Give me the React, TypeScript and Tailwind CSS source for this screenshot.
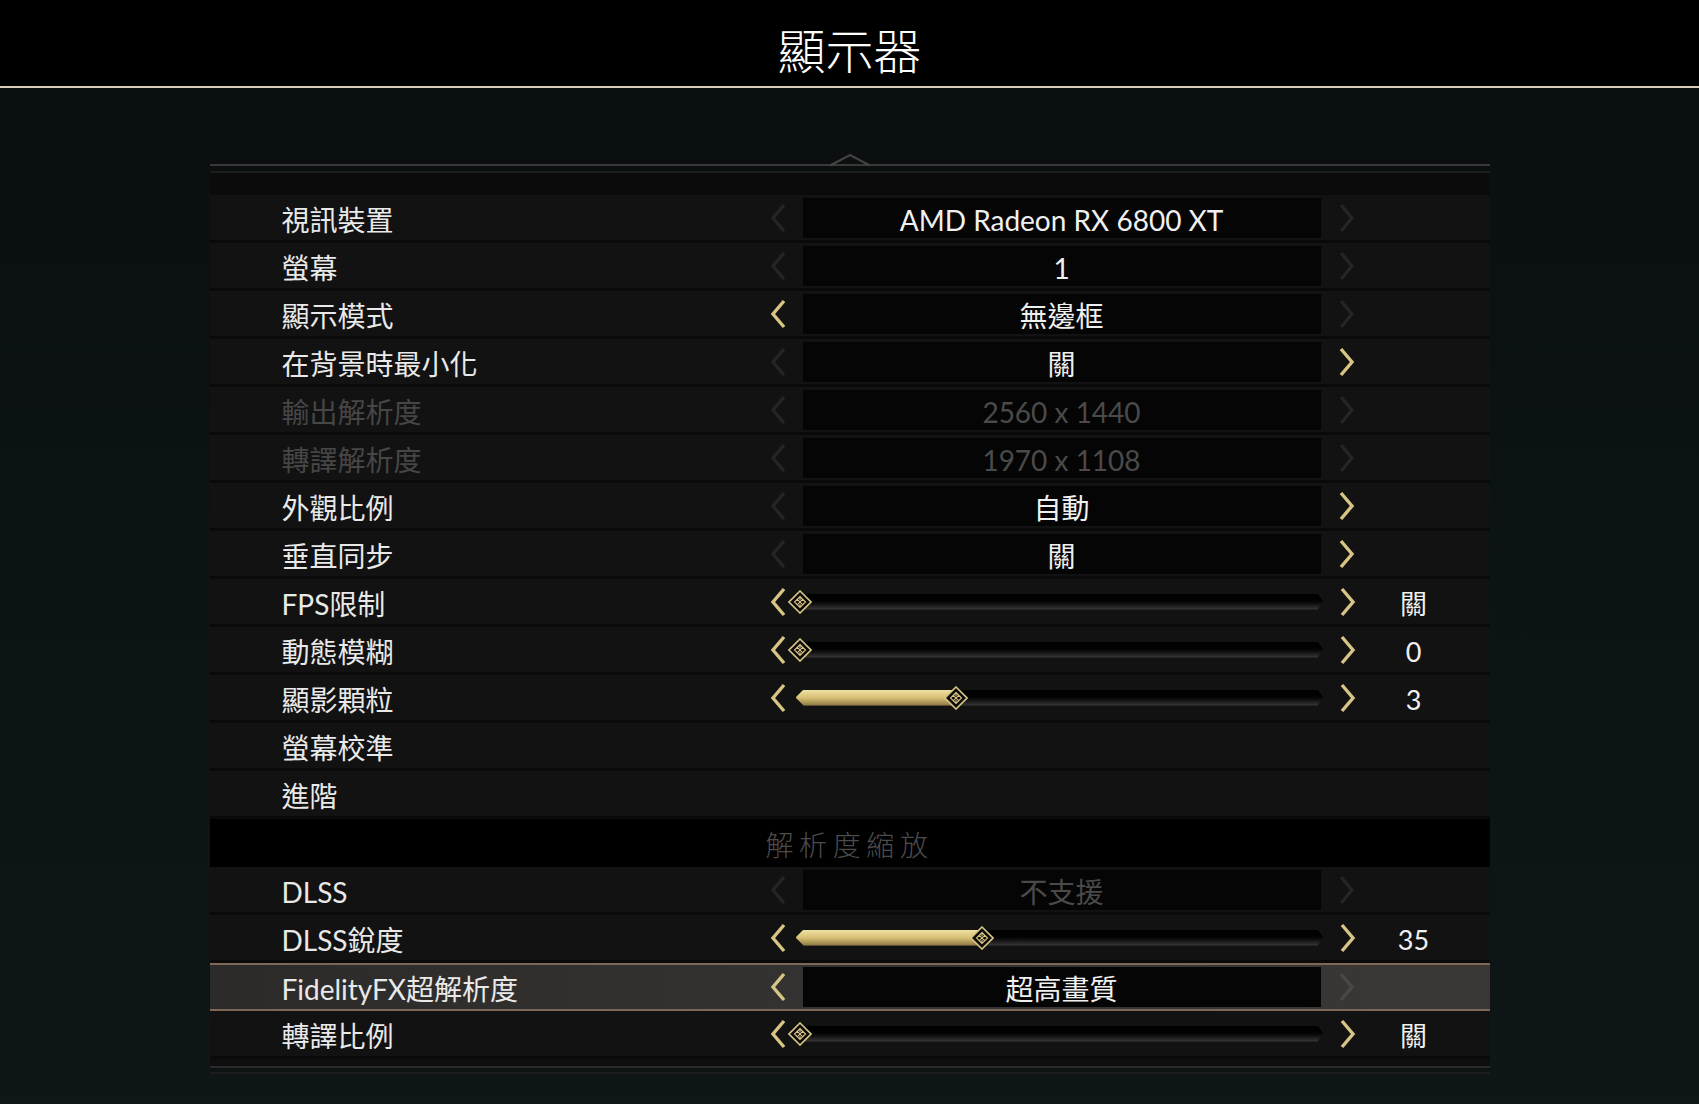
import React from 'react';

type Row =
  | { kind: 'select'; label: string; value: string; left?: boolean; right?: boolean; dimLabel?: boolean; dimValue?: boolean; active?: boolean }
  | { kind: 'slider'; label: string; pos: number; display: string }
  | { kind: 'plain'; label: string }
  | { kind: 'section'; label: string };

const rows: Row[] = [
  { kind: 'select', label: '視訊裝置', value: 'AMD Radeon RX 6800 XT' },
  { kind: 'select', label: '螢幕', value: '1' },
  { kind: 'select', label: '顯示模式', value: '無邊框', left: true },
  { kind: 'select', label: '在背景時最小化', value: '關', right: true },
  { kind: 'select', label: '輸出解析度', value: '2560 x 1440', dimLabel: true, dimValue: true },
  { kind: 'select', label: '轉譯解析度', value: '1970 x 1108', dimLabel: true, dimValue: true },
  { kind: 'select', label: '外觀比例', value: '自動', right: true },
  { kind: 'select', label: '垂直同步', value: '關', right: true },
  { kind: 'slider', label: 'FPS限制', pos: 0, display: '關' },
  { kind: 'slider', label: '動態模糊', pos: 0, display: '0' },
  { kind: 'slider', label: '顯影顆粒', pos: 0.3, display: '3' },
  { kind: 'plain', label: '螢幕校準' },
  { kind: 'plain', label: '進階' },
  { kind: 'section', label: '解析度縮放' },
  { kind: 'select', label: 'DLSS', value: '不支援', dimValue: true },
  { kind: 'slider', label: 'DLSS銳度', pos: 0.35, display: '35' },
  { kind: 'select', label: 'FidelityFX超解析度', value: '超高畫質', left: true, active: true },
  { kind: 'slider', label: '轉譯比例', pos: 0, display: '關' },
];

const GOLD = '#d8c585';

function Chevron({ dir, on, active }: { dir: 'left' | 'right'; on: boolean; active?: boolean }) {
  const color = on ? GOLD : active ? '#4a4846' : '#252525';
  return (
    <svg width="20" height="30" viewBox="0 0 20 30" className="block">
      <path
        d={dir === 'left' ? 'M16 2 L5 15 L16 28' : 'M4 2 L15 15 L4 28'}
        fill="none"
        stroke={color}
        strokeWidth="3.4"
        strokeLinejoin="miter"
      />
    </svg>
  );
}

function Thumb() {
  return (
    <svg width="24" height="24" viewBox="0 0 24 24" className="block">
      <polygon points="12,1 23,12 12,23 1,12" fill="#0d0c0a" stroke={GOLD} strokeWidth="1.6" />
      <path
        d="M12 6.5 L17.5 12 L12 17.5 L6.5 12 Z M9.2 9.2 L14.8 14.8 M14.8 9.2 L9.2 14.8 M12 6.5 L12 10 M12 14 L12 17.5"
        fill="none"
        stroke={GOLD}
        strokeWidth="1.1"
      />
    </svg>
  );
}

function SliderTrack({ pos }: { pos: number }) {
  const center = 4 + pos * 520;
  return (
    <div className="relative w-[528px] h-[24px] flex items-center">
      <div className="w-full h-[16px] bg-linear-to-b from-black via-[#070707] to-[#3b3b3b] [clip-path:polygon(0_50%,8px_0,calc(100%_-_6px)_0,100%_50%,calc(100%_-_6px)_100%,8px_100%)]" />
      {pos > 0 && (
        <div
          className="absolute left-0 top-[4px] h-[16px] bg-linear-to-b from-[#f0e1a2] via-[#d6bf74] to-[#8a7440] [clip-path:polygon(0_50%,8px_0,100%_0,100%_100%,8px_100%)]"
          style={{ width: center }}
        />
      )}
      <div className="absolute top-0" style={{ left: center - 12 }}>
        <Thumb />
      </div>
    </div>
  );
}

function SettingRow({ row }: { row: Row }) {
  if (row.kind === 'section') {
    return (
      <div className="h-[48px] bg-black flex items-center justify-center pt-[3px] text-[28px] tracking-[0.2em] text-[#4c4c4c] font-light">
        {row.label}
      </div>
    );
  }

  const active = row.kind === 'select' && row.active;
  const dimLabel = row.kind === 'select' && row.dimLabel;

  return (
    <div
      className={
        active
          ? 'h-[48px] flex items-center border-y-2 border-[#7d6858] bg-linear-to-r from-[#2c2b2a] via-[#353331] to-[#3a3735]'
          : 'h-[48px] flex items-center bg-[#121212] border-b-[3px] border-[#0a0a0a]'
      }
    >
      <div
        className={
          'w-[558px] pl-[72px] pt-[4px] text-[28px] leading-none ' + (dimLabel ? 'text-[#464646]' : 'text-[#e9e9e9]')
        }
      >
        {row.label}
      </div>

      {row.kind === 'select' && (
        <>
          <div className="w-[35px] flex">
            <Chevron dir="left" on={!!row.left} active={active} />
          </div>
          <div className="w-[518px] h-[40px] bg-[#050505] flex items-center justify-center pt-[4px]">
            <span className={'text-[28px] leading-none ' + (row.dimValue ? 'text-[#4a4a4a]' : 'text-[#f0f0f0]')}>
              {row.value}
            </span>
          </div>
          <div className="w-[52px] flex justify-center">
            <Chevron dir="right" on={!!row.right} active={active} />
          </div>
        </>
      )}

      {row.kind === 'slider' && (
        <>
          <div className="w-[28px] flex">
            <Chevron dir="left" on />
          </div>
          <SliderTrack pos={row.pos} />
          <div className="w-[49px] flex justify-center">
            <Chevron dir="right" on />
          </div>
          <div className="w-[82px] pt-[4px] text-center text-[27px] leading-none text-[#f0f0f0]">{row.display}</div>
        </>
      )}
    </div>
  );
}

export default function App() {
  return (
    <div className="min-h-[1104px] w-full bg-linear-to-b from-[#0a0f10] via-[#0c1314] to-[#0f1618] font-[Lato,'Noto_Sans_CJK_TC',sans-serif] font-normal text-white">
      <header className="h-[88px] bg-black border-b-2 border-[#d8cdb9] flex items-center justify-center">
        <h1 className="text-[48px] font-light leading-none text-white mt-[16px]">顯示器</h1>
      </header>

      <div className="pt-[66px] pb-[30px]">
        <div className="mx-auto w-[1280px] bg-[#0e0e0e]">
          <div className="relative h-[19px] bg-[#0b0f10]">
            <div className="absolute left-0 right-0 top-[10px] h-[2px] bg-[#383838]" />
            <div className="absolute left-0 right-0 top-[17px] h-[2px] bg-[#1c1c1c]" />
            <svg
              width="40"
              height="14"
              viewBox="0 0 40 14"
              className="absolute left-1/2 -translate-x-1/2 top-0"
            >
              <path d="M0 11.5 L20 1 L40 11.5" fill="none" stroke="#444444" strokeWidth="2" />
            </svg>
          </div>
          <div className="h-[22px] bg-[#0b0b0b]" />
          {rows.map((row, i) => (
            <SettingRow key={i} row={row} />
          ))}
          <div className="h-[7px]" />
          <div className="h-[2px] bg-[#2a2a2a]" />
          <div className="h-[4px] bg-[#0e1213]" />
          <div className="h-[2px] bg-[#1c1c1c]" />
        </div>
      </div>
    </div>
  );
}
